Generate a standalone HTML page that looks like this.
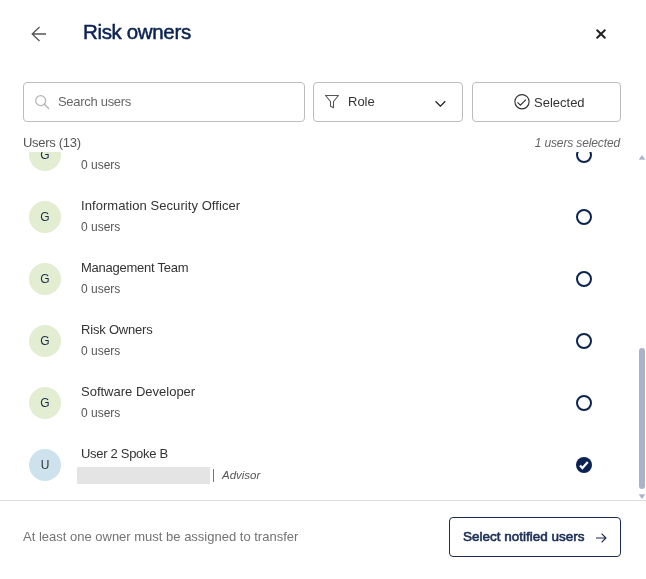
<!DOCTYPE html>
<html><head><meta charset="utf-8">
<style>
*{box-sizing:border-box;margin:0;padding:0}
html,body{width:646px;height:579px;overflow:hidden;background:#fff;font-family:"Liberation Sans",sans-serif;color:#333}
.abs{position:absolute}
#title{left:83px;top:19.5px;font-size:20.5px;letter-spacing:-0.35px;color:#0b2352;white-space:nowrap;-webkit-text-stroke:0.5px #0b2352}
.box{position:absolute;top:82px;height:40px;border:1px solid #bdbdbd;border-radius:4px;background:#fff}
.ph{position:absolute;font-size:13px;color:#666;white-space:nowrap}
#hdr{left:23px;top:135px;font-size:13px;color:#555;letter-spacing:-0.3px}
#sel{right:26px;top:135.5px;font-size:12px;letter-spacing:-0.13px;font-style:italic;color:#666}
.list{position:absolute;left:0;top:152px;width:646px;height:348px;overflow:hidden}
.row{position:absolute;left:0;width:636px;height:62px}
.av{position:absolute;left:29px;top:15px;width:32px;height:32px;border-radius:50%;background:#e2edd2;color:#1d2b4f;font-size:12px;text-align:center;line-height:32px}
.nm{position:absolute;left:81px;top:12px;font-size:13px;color:#333;white-space:nowrap}
.sub{position:absolute;left:81px;top:34px;font-size:12px;color:#555;white-space:nowrap}
.radio{position:absolute;left:576px;top:23px;width:16px;height:16px;border-radius:50%;border:2px solid #0b2352}
</style></head><body><div style="position:absolute;left:0;top:0;width:646px;height:579px;will-change:transform">
<svg class="abs" style="left:30px;top:26px" width="18" height="16" viewBox="0 0 18 16"><path d="M2.2 8H16M9.5 1L2.2 8L9.5 15" fill="none" stroke="#555" stroke-width="1.3"/></svg>
<div id="title" class="abs">Risk owners</div>
<svg class="abs" style="left:595px;top:28px" width="12" height="12" viewBox="0 0 12 12"><path d="M2.2 2.2L9.8 9.8M9.8 2.2L2.2 9.8" fill="none" stroke="#222" stroke-width="2" stroke-linecap="round"/></svg>

<div class="box" style="left:23px;width:282px">
  <svg class="abs" style="left:10px;top:11px" width="16" height="16" viewBox="0 0 16 16"><circle cx="6.7" cy="6.6" r="5" fill="none" stroke="#b3b3b3" stroke-width="1.2"/><path d="M10.2 10.1L14.6 14.5" stroke="#b3b3b3" stroke-width="1.4" stroke-linecap="round"/></svg>
  <div class="ph" style="left:34px;top:11px;letter-spacing:-0.3px">Search users</div>
</div>
<div class="box" style="left:313px;width:150px">
  <svg class="abs" style="left:10px;top:11px" width="16" height="16" viewBox="0 0 16 16"><path d="M1.5 1.5H14.5L9.5 7.5V13.8L6.5 12.3V7.5Z" fill="none" stroke="#555" stroke-width="1.1" stroke-linejoin="round"/></svg>
  <div class="ph" style="left:34px;top:11px;color:#333">Role</div>
  <svg class="abs" style="left:121px;top:15.5px" width="12" height="8" viewBox="0 0 12 8"><path d="M0.5 2.3L5.4 7.2L10.3 2.3" fill="none" stroke="#222" stroke-width="1.25"/></svg>
</div>
<div class="box" style="left:472px;width:149px">
  <svg class="abs" style="left:41px;top:11px" width="17" height="17" viewBox="0 0 17 17"><circle cx="8" cy="7.7" r="7.1" fill="none" stroke="#333" stroke-width="1.15"/><path d="M3.5 8.3L6.4 11.2L12 5.6" fill="none" stroke="#333" stroke-width="1.2"/></svg>
  <div class="ph" style="left:61px;top:11.5px;color:#333">Selected</div>
</div>

<div class="list">
  <div class="row" style="top:-28px">
    <div class="av">G</div>
    <div class="nm">General Group</div>
    <div class="sub">0 users</div>
    <div class="radio"></div>
  </div>
  <div class="row" style="top:34px">
    <div class="av">G</div>
    <div class="nm" style="letter-spacing:0.07px">Information Security Officer</div>
    <div class="sub">0 users</div>
    <div class="radio"></div>
  </div>
  <div class="row" style="top:96px">
    <div class="av">G</div>
    <div class="nm" style="letter-spacing:-0.25px">Management Team</div>
    <div class="sub">0 users</div>
    <div class="radio"></div>
  </div>
  <div class="row" style="top:158px">
    <div class="av">G</div>
    <div class="nm" style="letter-spacing:-0.2px">Risk Owners</div>
    <div class="sub">0 users</div>
    <div class="radio"></div>
  </div>
  <div class="row" style="top:220px">
    <div class="av">G</div>
    <div class="nm">Software Developer</div>
    <div class="sub">0 users</div>
    <div class="radio"></div>
  </div>
  <div class="row" style="top:282px">
    <div class="av" style="background:#cde2ec;color:#333">U</div>
    <div class="nm" style="letter-spacing:-0.3px">User 2 Spoke B</div>
    <div class="abs" style="left:77px;top:33px;width:133px;height:17px;background:#e4e4e4"></div>
    <div class="abs" style="left:213px;top:35px;width:1px;height:13px;background:#777"></div>
    <div class="sub" style="left:222px;top:34.5px;font-size:11.5px;font-style:italic">Advisor</div>
    <svg class="abs" style="left:576px;top:23px" width="16" height="16" viewBox="0 0 16 16"><circle cx="8" cy="8" r="8" fill="#0b2352"/><path d="M4 8.4L6.4 11L11.8 5" fill="none" stroke="#fff" stroke-width="2.2"/></svg>
  </div>
</div>
<div id="hdr" class="abs">Users (13)</div>
<div id="sel" class="abs">1 users selected</div>

<svg class="abs" style="left:639px;top:154.5px" width="6" height="5" viewBox="0 0 6 5"><path d="M0 4.6L3 0.2L6 4.6Z" fill="#a9b3c9" stroke="#a9b3c9" stroke-width="0.4" stroke-linejoin="round"/></svg>
<div class="abs" style="left:639px;top:348px;width:6px;height:141px;border-radius:3px;background:#a9b3c9"></div>
<svg class="abs" style="left:639px;top:493.5px" width="6" height="5" viewBox="0 0 6 5"><path d="M0 0.4L3 4.8L6 0.4Z" fill="#a9b3c9" stroke="#a9b3c9" stroke-width="0.4" stroke-linejoin="round"/></svg>

<div class="abs" style="left:0;top:500px;width:646px;height:1px;background:#ddd"></div>
<div class="abs" style="left:23px;top:529px;font-size:13px;color:#737373;white-space:nowrap">At least one owner must be assigned to transfer</div>
<div class="abs" style="left:449px;top:517px;width:172px;height:40px;border:1px solid #1b2d55;border-radius:4px"></div>
<div class="abs" style="left:463px;top:528.5px;font-size:13.5px;color:#1b2d55;white-space:nowrap;-webkit-text-stroke:0.6px #1b2d55">Select notified users</div>
<svg class="abs" style="left:595px;top:533px" width="12" height="10" viewBox="0 0 12 10"><path d="M1 5H11M6.6 0.7L10.9 5L6.6 9.3" fill="none" stroke="#1b2d55" stroke-width="1.2"/></svg>
</div></body></html>
